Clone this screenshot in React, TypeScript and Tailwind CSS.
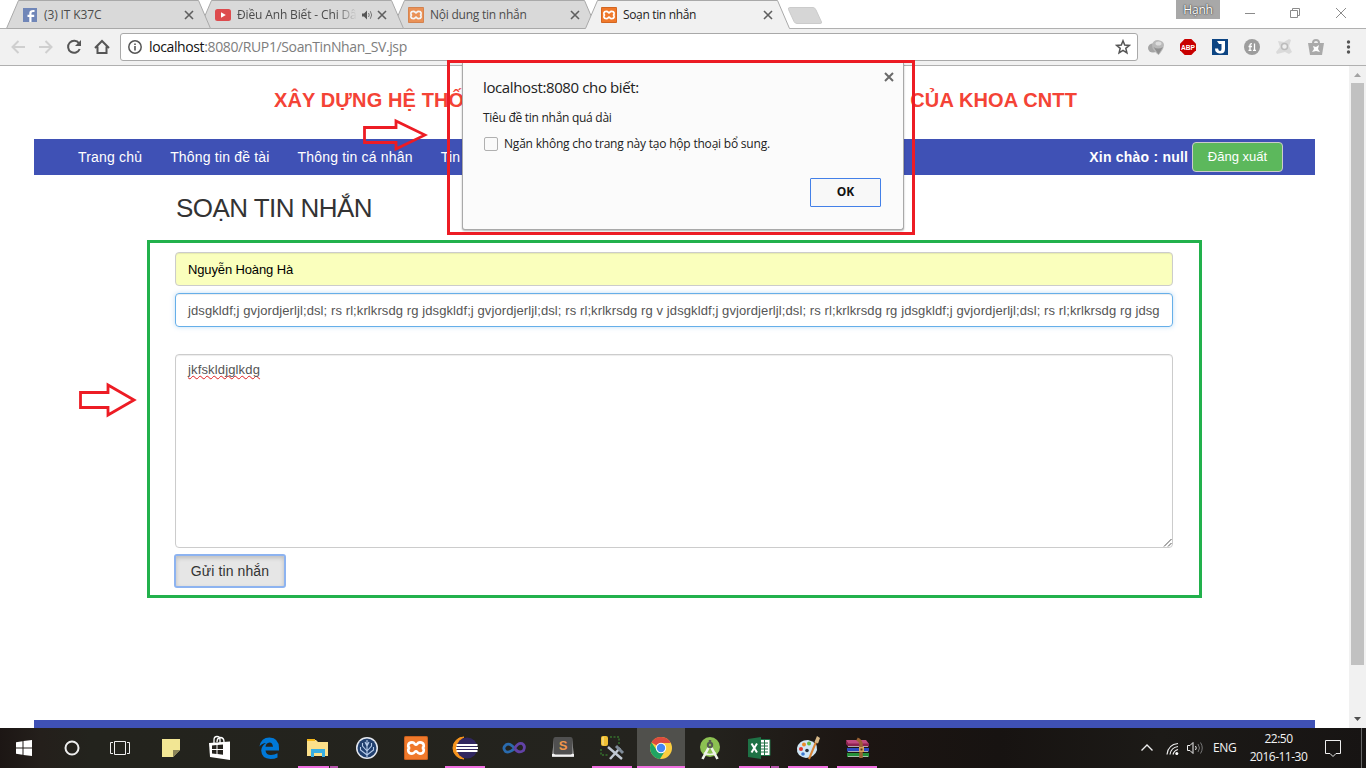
import React from 'react';

const UI = "font-['Open_Sans','Noto_Sans',sans-serif]";
const ARIAL = "font-['Liberation_Sans',Arial,sans-serif]";

function Xampp({ size, faded = false }: { size: number; faded?: boolean }) {
  return (
    <svg width={size} height={size} viewBox="0 0 24 24" opacity={faded ? 0.75 : 1}>
      <rect width="24" height="24" rx="1.5" fill="#c9601f" />
      <rect x="1" y="1" width="22" height="22" rx="1" fill="#f0792b" />
      <path
        d="M8 6.400C3.400 6.400 3.400 11.400 6 12C3.400 12.600 3.400 17.600 8 17.600C11 17.600 10.600 15.200 12 15.200C13.400 15.200 13 17.600 16 17.600C20.600 17.600 20.600 12.600 18 12C20.600 11.400 20.600 6.400 16 6.400C13 6.400 13.400 8.800 12 8.800C10.600 8.800 11 6.400 8 6.400Z"
        fill="none"
        stroke="#fff"
        strokeWidth="2.6"
      />
    </svg>
  );
}

function FacebookIcon() {
  return (
    <svg width="14" height="14" viewBox="0 0 14 14">
      <rect width="14" height="14" fill="#7086b8" />
      <path d="M8.500 14V9H11.200V6.800H8.500V5.400C8.500 4.300 9 4 11.500 4V2C8 1.700 6.300 2.800 6.300 5V6.800H4.500V9H6.300V14Z" fill="#fff" />
    </svg>
  );
}

function YoutubeIcon() {
  return (
    <svg width="16" height="12" viewBox="0 0 16 12">
      <rect width="16" height="12" rx="2.5" fill="#dd4b4e" />
      <path d="M6 3.3L10.8 6L6 8.7Z" fill="#fff" />
    </svg>
  );
}

function Cross({ size, color, width }: { size: number; color: string; width: number }) {
  return (
    <svg width={size} height={size} viewBox="0 0 10 10" className="block shrink-0">
      <path d="M1 1L9 9M9 1L1 9" stroke={color} strokeWidth={width} />
    </svg>
  );
}

function Tab({
  icon,
  title,
  active = false,
  audio = false,
  z,
  tracking,
}: {
  icon: React.ReactNode;
  title: string;
  active?: boolean;
  audio?: boolean;
  z: string;
  tracking: string;
}) {
  return (
    <div className={`relative -mr-3 flex h-[29px] w-[205px] shrink-0 items-center pl-4 ${z}`}>
      <svg className="absolute left-0 top-0 -z-10" width="205" height="29" viewBox="0 0 205 29">
        <path d="M0.5 29V28.5L12.5 0.5H192.5L204.5 28.5V29Z" fill={active ? '#f1f1f1' : '#d9d9d9'} />
        <path
          d={active ? 'M0.5 28.5L12.5 0.5H192.5L204.5 28.5' : 'M0.5 28.5L12.5 0.5H192.5L204.5 28.5Z'}
          fill="none"
          stroke="#a9a9a9"
        />
      </svg>
      <span className="flex w-[22px] items-center">{icon}</span>
      <span
        className={`w-[120px] whitespace-nowrap text-[12px] leading-[18px] ${tracking} ${
          active ? 'text-[#222]' : 'text-[#4c4c4c]'
        } ${audio ? '[mask-image:linear-gradient(to_right,black_82%,transparent_100%)]' : ''}`}
      >
        {title}
      </span>
      <span className="flex w-5 justify-center">
        {audio && (
          <svg width="11" height="10" viewBox="0 0 11 10">
            <path d="M0 3.500H2L5 0.500V9.500L2 6.500H0Z" fill="#555" />
            <path d="M6.500 3Q8 5 6.500 7M8.300 1.200Q11 5 8.300 8.800" stroke="#777" fill="none" />
          </svg>
        )}
      </span>
      <Cross size={10} color="#5f5f5f" width={1.6} />
    </div>
  );
}

function TabStrip() {
  return (
    <div className="flex h-[29px] border-b border-[#b0b0b0] bg-white">
      <div className="isolate flex h-[29px] pl-1.5">
        <Tab z="isolate z-[4]" icon={<span className="pl-px"><FacebookIcon /></span>} title="(3) IT K37C" tracking="tracking-[-0.12px]" />
        <Tab z="isolate z-[3]" icon={<YoutubeIcon />} title="Điều Anh Biết - Chi Dâ" audio tracking="tracking-[-0.14px]" />
        <Tab z="isolate z-[2]" icon={<Xampp size={16} faded />} title="Nội dung tin nhắn" tracking="tracking-[-0.24px]" />
        <Tab z="isolate z-[5]" icon={<Xampp size={16} />} title="Soạn tin nhắn" active tracking="tracking-[-0.34px]" />
      </div>
      <svg width="36" height="19" viewBox="0 0 36 19" className="ml-[9px] mt-1.5">
        <path d="M2.5 1.5H26Q28 1.5 29 4L34.5 16Q35 17.5 33 17.5H10Q8 17.5 7 15.5L1.5 3.5Q1 1.5 2.5 1.5Z" fill="#d6d6d6" stroke="#cbcbcb" />
      </svg>
      <div className="ml-auto flex">
        <div className="mr-6 flex h-[19px] w-[44px] items-center justify-center bg-[#a8a8a8] text-[12px] leading-[17px] tracking-[-0.2px] text-white [text-shadow:0_0_2px_#333,0_0_1px_#333]">
          Hạnh
        </div>
        <svg width="122" height="28" viewBox="0 0 122 28" fill="none" stroke="#8b8b8b">
          <path d="M1 13.5H11M46.500 10.500H53.500V17.500H46.500ZM48.500 10.500V8.500H55.500V15.500H53.500M92 8L102 18M102 8L92 18" />
        </svg>
      </div>
    </div>
  );
}

function Toolbar() {
  return (
    <div className="flex h-[37px] shrink-0 items-center border-b border-[#b0b0b0] bg-[#f1f1f1]">
      <svg width="120" height="36" viewBox="0 0 120 36" fill="none" className="shrink-0">
        <g stroke="#cfcfcf" strokeWidth="2">
          <path d="M25 18H12.5M18.5 12L12.5 18L18.5 24" />
          <path d="M39 18H51.5M45.5 12L51.5 18L45.5 24" />
        </g>
        <path d="M79 14.300A6 6 0 1 0 79.700 20" stroke="#555" strokeWidth="2" />
        <path d="M81 11V17H75Z" fill="#555" />
        <path d="M95 19L102 12L109 19M97.500 17.500V24H106.500V17.500" stroke="#555" strokeWidth="2" />
      </svg>
      <div className="flex h-7 w-[1018px] items-center rounded-[3px] border border-[#a9a9a9] bg-white pl-1.5 pr-1.5">
        <svg width="16" height="16" viewBox="0 0 16 16" fill="none" stroke="#555">
          <circle cx="8" cy="8" r="6.2" strokeWidth="1.5" />
          <path d="M8 7V11.5M8 4.4V6" strokeWidth="1.6" />
        </svg>
        <span className="-mt-px ml-1.5 whitespace-nowrap text-[14px] tracking-[-0.38px] text-[#7d7d7d]">
          <span className="text-[#111]">localhost</span>:8080/RUP1/SoanTinNhan_SV.jsp
        </span>
        <svg width="16" height="16" viewBox="0 0 16 16" className="ml-auto" fill="none" stroke="#555" strokeWidth="1.5">
          <path d="M8 1.8L9.7 6.1L14.3 6.4L10.8 9.3L11.9 13.8L8 11.3L4.1 13.8L5.2 9.3L1.7 6.4L6.3 6.1Z" />
        </svg>
      </div>
      <svg width="228" height="36" viewBox="0 0 228 36" className="shrink-0">
        <ellipse cx="15" cy="19" rx="5" ry="4.500" fill="#a5a5a5" />
        <path d="M14 16Q15 11 20 11Q26 12 26 16Q25.500 21 20.500 26Q14 21 14 16Z" fill="#b9b9b9" />
        <path d="M15.500 18Q20 21 25 18L20.500 25.500Z" fill="#909090" />
        <ellipse cx="20.500" cy="14.500" rx="3" ry="2" fill="#dcdcdc" />
        <path d="M46.700 10H53.300L58 14.700V21.300L53.300 26H46.700L42 21.300V14.700Z" fill="#c80000" />
        <text x="50" y="20.700" textAnchor="middle" fontSize="7.500" fontWeight="bold" fill="#fff" textLength="14" lengthAdjust="spacingAndGlyphs" fontFamily="Liberation Sans">ABP</text>
        <rect x="74" y="10" width="16" height="16" fill="#0d4583" />
        <path d="M79 12H87V20Q87 25 81.500 24.500Q77 24 77 19.500H80Q80.500 22 82 22Q83.500 22 83.500 20V15H81Z" fill="#fff" />
        <circle cx="114" cy="18" r="8" fill="#9d9d9d" />
        <path d="M112 21V16Q112 14.700 114 14.700M110.500 17.500H114M116.500 14.500V21M110.500 21.300H113.500M115 21.300H118" stroke="#fff" strokeWidth="1.300" fill="none" />
        <path d="M140 12L146 13L151 10L153 11L151 17L154 23L151 25L147 23L139 25L138 23L142 18Z" fill="#dadada" />
        <circle cx="146.500" cy="17.500" r="3" fill="#eee" stroke="#bbb" strokeWidth="1.500" />
        <path d="M175 16V14Q175 11 178 11Q181 11 181 14V16" stroke="#aaa" strokeWidth="2" fill="none" />
        <path d="M170 14H186L184 26H172Z" fill="#aaa" />
        <path d="M175 17L178 18L181 16L180 20L182 23L178 22L174 23L176 20Z" fill="#fff" />
        <g fill="#555"><circle cx="210.500" cy="13" r="1.700" /><circle cx="210.500" cy="18" r="1.700" /><circle cx="210.500" cy="23" r="1.700" /></g>
      </svg>
    </div>
  );
}

function Page() {
  return (
    <div className={`flex h-[662px] shrink-0 bg-white ${ARIAL}`}>
      <div className="flex w-[1349px] flex-col pl-[34px] pr-[34px]">
        <div className="flex h-[73px] justify-between pl-60 pr-[238px] pt-[19px] text-[20px] font-bold leading-[30px] tracking-[0.12px] text-[#f44336]">
          <span>XÂY DỰNG HỆ THỐNG</span>
          <span>CỦA KHOA CNTT</span>
        </div>
        <nav className="flex h-9 items-center bg-[#3f51b5] pl-[44px] pr-8 text-[14px] text-white">
          <div className="flex gap-7 tracking-[0.18px]">
            <span>Trang chủ</span>
            <span>Thông tin đề tài</span>
            <span>Thông tin cá nhân</span>
            <span>Tin</span>
          </div>
          <span className="ml-auto mr-[3.8px] font-bold tracking-[0.22px]">Xin chào : null</span>
          <button className="h-[30px] w-[91px] rounded border border-[#ccc] bg-[#5cb85c] text-[13px]">Đăng xuất</button>
        </nav>
        <h1 className="h-[65px] pl-[142px] pt-[17px] text-[26px] leading-[32px] tracking-[-0.55px] text-[#333]">SOẠN TIN NHẮN</h1>
        <form className="ml-[113px] flex h-[358px] w-[1055px] flex-col border-[3px] border-[#22b14c] pl-[25px] pt-[9px] text-[13px] text-[#555]">
          <div className="flex h-[34px] w-[998px] items-center rounded border border-[#ccc] bg-[#faffbd] px-3 pt-0.5 tracking-[-0.13px] text-black shadow-[inset_0_1px_1px_rgba(0,0,0,0.08)]">
            Nguyễn Hoàng Hà
          </div>
          <div className="mt-[7px] flex h-[34px] w-[998px] items-center rounded border border-[#66afe9] px-3 pt-0.5 shadow-[inset_0_1px_1px_rgba(0,0,0,0.075),0_0_5px_rgba(102,175,233,0.4)]">
            <span className="whitespace-nowrap tracking-[0.097px]">
              jdsgkldf;j gvjordjerljl;dsl; rs rl;krlkrsdg rg jdsgkldf;j gvjordjerljl;dsl; rs rl;krlkrsdg rg v jdsgkldf;j gvjordjerljl;dsl; rs rl;krlkrsdg rg jdsgkldf;j gvjordjerljl;dsl; rs rl;krlkrsdg rg jdsg
            </span>
          </div>
          <div className="mt-[27px] flex h-[194px] w-[998px] justify-between rounded border border-[#ccc] pl-3 pt-[5px] shadow-[inset_0_1px_1px_rgba(0,0,0,0.075)]">
            <span className="h-5 leading-5 tracking-[0.15px] underline decoration-[#e02020] decoration-wavy decoration-[0.7px] underline-offset-[1px] [text-decoration-skip-ink:none]">
              jkfskldjglkdg
            </span>
            <svg width="9" height="9" viewBox="0 0 9 9" className="self-end">
              <path d="M1 8.500L8.500 1M5 8.500L8.500 5" stroke="#555" />
            </svg>
          </div>
          <button className="-ml-px mt-1.5 h-[34px] w-28 rounded-[3px] border-2 border-[#8db3f0] bg-[#e6e6e6] text-[14px] tracking-[0.1px] text-[#333] shadow-[inset_0_2px_4px_rgba(0,0,0,0.18)]">
            Gửi tin nhắn
          </button>
        </form>
        <div className="mt-auto h-2 bg-[#3f51b5]" />
      </div>
      <div className="flex w-[17px] flex-col items-center bg-[#f1f1f1]">
        <svg width="17" height="17" viewBox="0 0 17 17"><path d="M5 11H12L8.500 7Z" fill="#a3a3a3" /></svg>
        <div className="h-[582px] w-[13px] bg-[#c1c1c1]" />
        <svg width="17" height="17" viewBox="0 0 17 17" className="mt-auto"><path d="M5 6H12L8.500 10Z" fill="#505050" /></svg>
      </div>
    </div>
  );
}

function AlertDialog() {
  return (
    <div className="absolute left-[447px] top-[60px] h-[175px] w-[468px] border-[3px] border-[#ed1c24]">
      <div className="ml-3 flex h-[167px] w-[442px] flex-col rounded-b-[3px] border border-t-0 border-[#a9a9a9] bg-[#fbfbfb] pl-5 pr-[22px] text-[#222] shadow-[0_1px_2px_rgba(0,0,0,0.3)]">
        <div className="flex h-[45px] justify-between pt-[13px]">
          <span className="whitespace-nowrap text-[15px] leading-[22px] tracking-[-0.38px]">localhost:8080 cho biết:</span>
          <span className="-mr-[13px] -mt-1"><Cross size={10} color="#6a6a6a" width={2} /></span>
        </div>
        <span className="whitespace-nowrap text-[12px] leading-[20px] tracking-[-0.28px]">Tiêu đề tin nhắn quá dài</span>
        <label className="mt-1.5 flex h-5 items-center whitespace-nowrap text-[12px] tracking-[-0.21px]">
          <span className="ml-px mr-1.5 h-[14px] w-[14px] rounded-[2px] border border-[#b0b0b0] bg-[#fafafa]" />
          Ngăn không cho trang này tạo hộp thoại bổ sung.
        </label>
        <button className="ml-auto mt-6 h-[29px] w-[71px] rounded-[1px] border border-[#4380e8] bg-[#f8f8f8] pb-px text-[12px] font-bold leading-[26px] text-[#111]">
          OK
        </button>
      </div>
    </div>
  );
}

const taskIcons: { name: string; art: React.ReactNode; line?: 'full' | 'wide' | 'split' }[] = [
  {
    name: 'notes',
    art: <g><path d="M15 11H33V22L26 29H15Z" fill="#f2e694" /><path d="M26 29V22H33Z" fill="#8b8458" /></g>,
  },
  {
    name: 'store',
    art: (
      <g>
        <path d="M18 15V12Q18 8.500 21 8.500Q24 8.500 24 12V15M21 14Q21 9.500 25 9.500Q28 10 28 14" stroke="#fff" strokeWidth="1.300" fill="none" />
        <path d="M13 15L34 13.500V32L14 29Z" fill="#fff" />
        <path d="M16 17.500L20.500 17V21H16ZM21.500 17L27 16.500V21H21.500ZM16 22H20.500V26L16 25.500ZM21.500 22H27V26.700L21.500 26Z" fill="#24221d" />
      </g>
    ),
  },
  {
    name: 'edge',
    art: <path d="M14.500 18.500Q16 9.500 24.500 9.500Q34 10 34 20V22.500H20.500Q21 27 26 27Q29.500 27 32.500 25.200V29.500Q29.500 31 25.500 31Q16.500 30.500 16.200 22.500Q16.500 17.500 21 15Q17 15 14.500 18.500ZM20.500 18.800H28Q27.500 14.500 24.500 14.500Q21 15 20.500 18.800Z" fill="#0078d7" fillRule="evenodd" />,
  },
  {
    name: 'explorer',
    art: <g><path d="M13 12H22L24 14H34V28H13Z" fill="#fbe08a" /><path d="M13 11H21V13H13Z" fill="#f4b71a" /><path d="M17 21H31V29H28V25H20V29H17Z" fill="#37aee2" /></g>,
    line: 'split',
  },
  {
    name: 'tree',
    art: (
      <g>
        <circle cx="24" cy="20" r="11" fill="#e4e8f0" />
        <circle cx="24" cy="20" r="9.500" fill="#21406f" />
        <path d="M24 29V12M24 27L17.500 22V19M24 27L30.500 22V19M24 23L19.500 18V15M24 23L28.500 18V15M24 18L22 14M24 18L26 14" stroke="#b6cbea" strokeWidth="1.100" fill="none" />
      </g>
    ),
  },
  { name: 'xampp', art: <g transform="translate(12 8)"><Xampp size={24} /></g> },
  {
    name: 'eclipse',
    art: (
      <g>
        <path d="M23 9A11 11 0 0 0 23 31A13 13 0 0 1 23 9Z" fill="#f7941e" stroke="#f7941e" />
        <circle cx="26" cy="20" r="10.500" fill="#30265f" />
        <path d="M15.500 17H36.500M15 20H37M15.500 23H36.500" stroke="#fff" strokeWidth="1.900" />
      </g>
    ),
    line: 'wide',
  },
  {
    name: 'visual',
    art: (
      <g fill="none" strokeWidth="2.800">
        <path d="M24.500 20.500Q20 14.500 16 16.800Q12 20 15.500 23.500Q19 25.500 24.500 20.500" stroke="#2a6bae" />
        <path d="M24.500 20.500Q28 14.500 32 15.500Q36 18 33.500 22.500Q29 26 24.500 20.500" stroke="#6242a6" />
      </g>
    ),
  },
  {
    name: 'sublime',
    art: (
      <g>
        <path d="M15 10H33L35 29H13Z" fill="#b5b5b5" />
        <path d="M13 26H35V28.500H13Z" fill="#f2f2f2" />
        <rect x="14.500" y="9" width="19" height="17.500" rx="2" fill="#505050" />
        <text x="24" y="22" fontSize="13" fontWeight="bold" textAnchor="middle" fill="#f0964a" fontFamily="Liberation Sans">S</text>
      </g>
    ),
  },
  {
    name: 'sqltools',
    art: (
      <g>
        <rect x="13" y="8" width="7" height="10" rx="2" fill="#f0c033" />
        <path d="M15 9V17" stroke="#fbe9a0" />
        <path d="M22 9H31V17M13 21V27H20" stroke="#3f9a35" strokeDasharray="2 1.500" fill="none" />
        <path d="M20 19L34 31M32 20L22 31" stroke="#c0c8d2" strokeWidth="2.500" />
        <path d="M28 18L35 25" stroke="#7f8b98" strokeWidth="3" />
      </g>
    ),
    line: 'wide',
  },
  {
    name: 'chrome',
    art: (
      <g>
        <circle cx="24" cy="20" r="11" fill="#fbcd3f" />
        <path d="M24 20L14.500 14.500A11 11 0 0 1 33.800 15H24Z" fill="#dd4b3e" />
        <path d="M14.500 14.500A11 11 0 0 0 23 31L28.500 22L20 22.500Z" fill="#1fa463" />
        <circle cx="24" cy="20" r="5.200" fill="#fff" />
        <circle cx="24" cy="20" r="4.200" fill="#4587f4" />
      </g>
    ),
    line: 'full',
  },
  {
    name: 'android',
    art: (
      <g>
        <circle cx="24" cy="19" r="10" fill="#8cc152" />
        <path d="M24 17L16.500 31M24 17L31.500 31" stroke="#eef3ea" strokeWidth="2.600" fill="none" />
        <path d="M18 25Q24 28 30 25" stroke="#eef3ea" strokeWidth="1.500" fill="none" />
        <circle cx="24" cy="17" r="3.200" fill="#555b50" /><circle cx="24" cy="17" r="1.200" fill="#8cc152" /><path d="M24 12V14.500" stroke="#555b50" strokeWidth="2.500" />
      </g>
    ),
  },
  {
    name: 'excel',
    art: (
      <g>
        <path d="M24 11.500H35V27.500H24Z" fill="#fff" stroke="#1e7145" />
        <path d="M26 15H33M26 18H33M26 21H33M26 24H33M29.500 12V27" stroke="#1e7145" />
        <path d="M13 11L26 9V31L13 29Z" fill="#1e7145" />
        <path d="M16.500 15.500L22 24.500M22 15.500L16.500 24.500" stroke="#fff" strokeWidth="2" />
      </g>
    ),
    line: 'split',
  },
  {
    name: 'paint',
    art: (
      <g>
        <path d="M24 12Q34 14 33 22Q31 29 22 30Q12 28 13 20Q15 12 24 12Z" fill="#cfe6f5" />
        <circle cx="17" cy="21" r="2" fill="#e0342c" /><circle cx="20" cy="16.500" r="2" fill="#e98a28" />
        <circle cx="25" cy="15.500" r="2" fill="#62b947" /><circle cx="19" cy="26" r="1.800" fill="#3c78d0" />
        <circle cx="23" cy="22.500" r="1.800" fill="#25313c" />
        <path d="M32 14L25 31" stroke="#d98536" strokeWidth="2" /><path d="M30.500 14L33 8L36 10L34 15.500Z" fill="#d8b98a" />
      </g>
    ),
    line: 'wide',
  },
  {
    name: 'winrar',
    art: (
      <g>
        <path d="M13 12H33L36 16H15Z" fill="#c04a80" /><path d="M13 12L15 15.500H36V18.500H15L13 16Z" fill="#8e2350" />
        <rect x="14" y="20" width="22" height="3.500" fill="#2c49c0" /><rect x="14" y="25" width="22" height="4" fill="#25903a" />
        <path d="M15 18.500H35M15 23.500H35M15 28.500H35" stroke="#ccc" strokeWidth="0.800" />
        <path d="M24 11Q28 13 28 16V30" stroke="#9a6234" strokeWidth="3.500" fill="none" /><rect x="26" y="19" width="5" height="5" fill="#d9a25c" />
        <rect x="27.500" y="20.500" width="2" height="2" fill="#5d3517" />
      </g>
    ),
    line: 'wide',
  },
];

function Taskbar() {
  return (
    <div className="flex h-10 shrink-0 items-stretch bg-[linear-gradient(to_right,#1c1614_0px,#241f1b_40px,#23231d_90px,#24231e_700px,#1c1512_860px,#171311_1000px,#1c1a17_1160px,#171413_1366px)]">
      <svg width="147" height="40" viewBox="0 0 147 40" fill="none" className="shrink-0">
        <path d="M16 14.300L22.500 13.300V19.500H16ZM23.500 13.100L32 12V19.500H23.500ZM16 20.500H22.500V26.700L16 25.700ZM23.500 20.500H32V28L23.500 26.900Z" fill="#fff" />
        <circle cx="72" cy="20" r="6.500" stroke="#eee" strokeWidth="2" />
        <path d="M114.500 13.500H125.500V26.500H114.500ZM113 14.500H110.500V25.500H113M127 14.500H129.500V25.500H127" stroke="#eee" />
      </svg>
      <div className="flex gap-px">
        {taskIcons.map((t) => (
          <div key={t.name} className={`flex w-12 flex-col items-center ${t.line === 'full' ? 'bg-[#50504c]' : ''}`}>
            <svg width="48" height="38" viewBox="0 0 48 38" className="shrink-0">{t.art}</svg>
            {t.line === 'full' && <div className="h-0.5 w-12 bg-[#f06fe0]" />}
            {t.line === 'wide' && <div className="h-0.5 w-10 bg-[#f06fe0]" />}
            {t.line === 'split' && (
              <div className="flex h-0.5 w-10 gap-px">
                <div className="w-[31px] bg-[#f06fe0]" />
                <div className="w-2 bg-[#b654ab]" />
              </div>
            )}
          </div>
        ))}
      </div>
      <div className="ml-auto flex items-center text-[12px] text-[#f3f3f3]">
        <svg width="64" height="40" viewBox="0 0 64 40" fill="none" stroke="#eee">
          <path d="M0.500 22.500L6 17L11.500 22.500" strokeWidth="1.400" />
          <path d="M26 26.500Q27 16.500 37 15.500M29 26.500Q30 19.500 37 18.500M32 26.500Q33 22.500 37 21.500" strokeWidth="1.200" />
          <circle cx="35.800" cy="25.500" r="1.500" fill="#fff" stroke="none" />
          <path d="M46.500 17.500H49L52 14.500V25.500L49 22.500H46.500Z" />
          <path d="M54.500 18Q56 20 54.500 22" />
          <path d="M57 16Q60 20 57 24M59.500 14.500Q63 20 59.500 25.500" stroke="#777" />
        </svg>
        <span className="ml-2 w-[23px] whitespace-nowrap tracking-[-0.4px]">ENG</span>
        <div className="ml-[13px] flex w-[59px] flex-col items-center whitespace-nowrap leading-[18px] tracking-[-0.5px]">
          <span>22:50</span>
          <span>2016-11-30</span>
        </div>
        <svg width="58" height="40" viewBox="0 0 58 40" fill="none">
          <path d="M17.500 12.500H32.500V25.500H28L25 28.500L22 25.500H17.500Z" stroke="#eee" />
          <path d="M53.500 0V40" stroke="#666" />
        </svg>
      </div>
    </div>
  );
}

export default function App() {
  return (
    <div className={`relative flex h-[768px] w-[1366px] flex-col overflow-hidden bg-white ${UI}`}>
      <TabStrip />
      <Toolbar />
      <Page />
      <Taskbar />
      <AlertDialog />
      <svg width="66" height="34" viewBox="0 0 66 34" className="absolute left-[362px] top-[118px]">
        <path d="M2.500 9.500H34V3L63 17L34 31V24.500H2.500Z" fill="none" stroke="#ed1c24" strokeWidth="2.800" />
      </svg>
      <svg width="60" height="36" viewBox="0 0 60 36" className="absolute left-[78px] top-[382px]">
        <path d="M2.500 10.500H30V3L56 18L30 33V25.500H2.500Z" fill="none" stroke="#ed1c24" strokeWidth="2.800" />
      </svg>
    </div>
  );
}
